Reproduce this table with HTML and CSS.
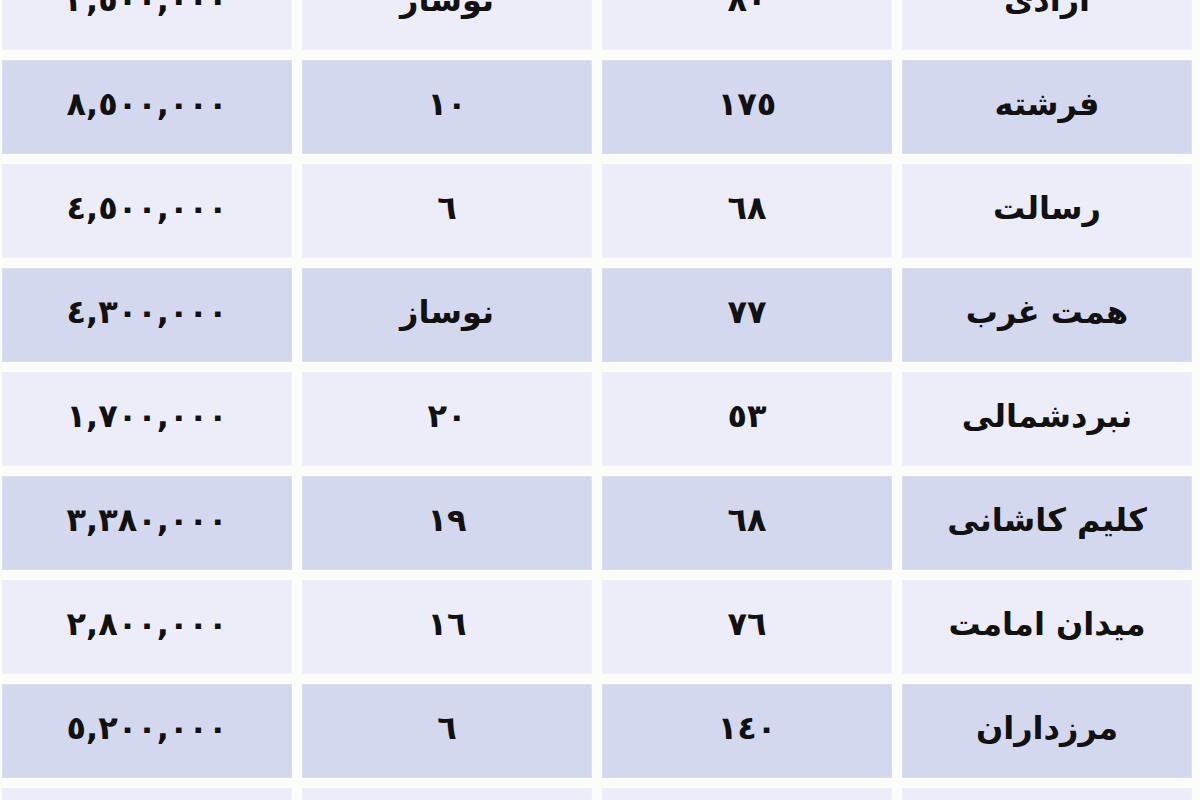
FILE: index.html
```html
<!DOCTYPE html>
<html lang="fa" dir="rtl">
<head>
<meta charset="utf-8">
<title>جدول قیمت</title>
<link rel="stylesheet" href="styles.css">
</head>
<body>
<div class="table">
  <div class="row light"><div class="cell">آزادی</div><div class="cell">٨٠</div><div class="cell">نوساز</div><div class="cell">٢,٥٠٠,٠٠٠</div></div>
  <div class="row dark"><div class="cell">فرشته</div><div class="cell">١٧٥</div><div class="cell">١٠</div><div class="cell">٨,٥٠٠,٠٠٠</div></div>
  <div class="row light"><div class="cell">رسالت</div><div class="cell">٦٨</div><div class="cell">٦</div><div class="cell">٤,٥٠٠,٠٠٠</div></div>
  <div class="row dark"><div class="cell">همت غرب</div><div class="cell">٧٧</div><div class="cell">نوساز</div><div class="cell">٤,٣٠٠,٠٠٠</div></div>
  <div class="row light"><div class="cell">نبردشمالی</div><div class="cell">٥٣</div><div class="cell">٢٠</div><div class="cell">١,٧٠٠,٠٠٠</div></div>
  <div class="row dark"><div class="cell">کلیم کاشانی</div><div class="cell">٦٨</div><div class="cell">١٩</div><div class="cell">٣,٣٨٠,٠٠٠</div></div>
  <div class="row light"><div class="cell">میدان امامت</div><div class="cell">٧٦</div><div class="cell">١٦</div><div class="cell">٢,٨٠٠,٠٠٠</div></div>
  <div class="row dark"><div class="cell">مرزداران</div><div class="cell">١٤٠</div><div class="cell">٦</div><div class="cell">٥,٢٠٠,٠٠٠</div></div>
  <div class="row light"><div class="cell"></div><div class="cell"></div><div class="cell"></div><div class="cell"></div></div>
</div>
</body>
</html>
```

FILE: styles.css
```css
html, body {
  margin: 0;
  padding: 0;
  background: #fbfdfb;
  overflow: hidden;
  height: 800px;
}

.table {
  display: flex;
  flex-direction: column;
  gap: 10px;
  margin-top: -44px;
  padding-right: 8px;
}

.row {
  display: grid;
  grid-template-columns: repeat(4, 290px);
  column-gap: 10px;
  height: 94px;
}

.cell {
  display: flex;
  align-items: center;
  justify-content: center;
  padding-bottom: 6px;
  font-family: "DejaVu Sans", sans-serif;
  font-weight: bold;
  font-size: 32px;
  color: #111;
  box-sizing: border-box;
  border: 1px solid rgba(255, 255, 255, 0.2);
}

.light .cell {
  background: #ecedf8;
}

.dark .cell {
  background: #d4d8ef;
}
```
